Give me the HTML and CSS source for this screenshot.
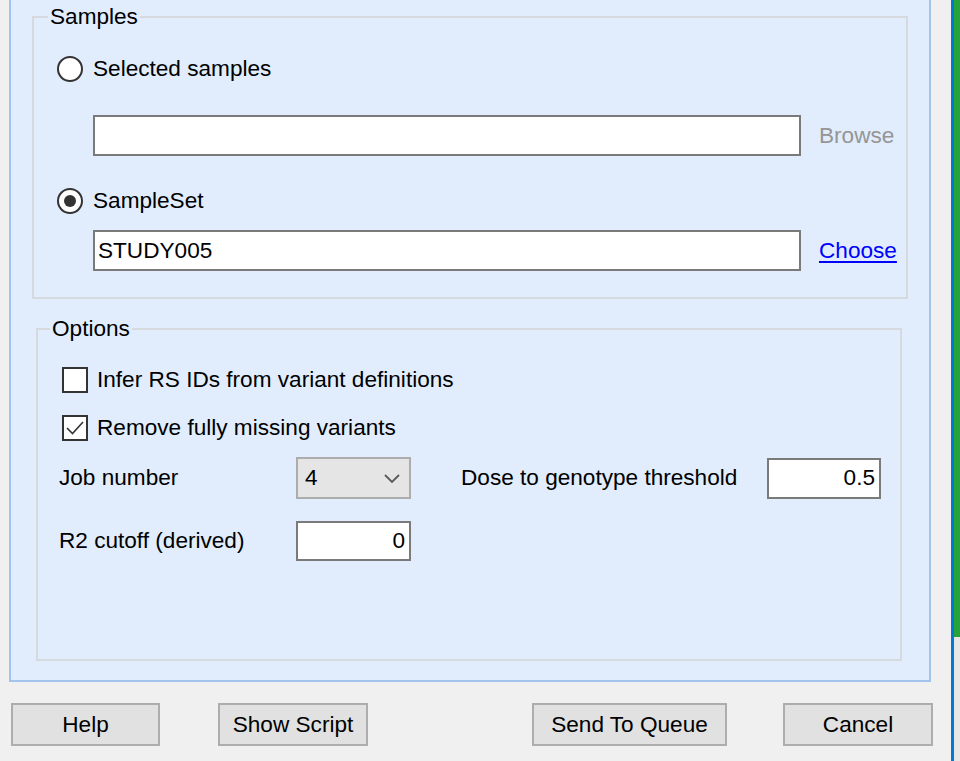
FILE: index.html
```html
<!DOCTYPE html>
<html lang="en">
<head>
<meta charset="utf-8">
<title>Samples and Options</title>
<link rel="stylesheet" href="styles.css">
</head>
<body>
<div class="window">
  <div class="dialog">
    <div class="panel">
      <fieldset class="group group-samples">
        <legend class="group-title">Samples</legend>
        <div class="samples-body">
          <label class="choice">
            <span class="radio"></span>
            <span class="choice-text">Selected samples</span>
          </label>
          <div class="field-row field-row-first">
            <input class="textbox" type="text" value="" readonly>
            <span class="side-action disabled">Browse</span>
          </div>
          <label class="choice choice-second">
            <span class="radio checked"></span>
            <span class="choice-text">SampleSet</span>
          </label>
          <div class="field-row field-row-second">
            <input class="textbox" type="text" value="STUDY005" readonly>
            <a class="side-action link" href="#">Choose</a>
          </div>
        </div>
      </fieldset>

      <fieldset class="group group-options">
        <legend class="group-title">Options</legend>
        <div class="options-body">
          <label class="check-row">
            <span class="checkbox"></span>
            <span class="choice-text">Infer RS IDs from variant definitions</span>
          </label>
          <label class="check-row check-row-second">
            <span class="checkbox">
              <svg class="checkmark" viewBox="0 0 22 22" width="22" height="22"><polyline points="3,11 8.5,16.5 19,5" fill="none" stroke="#333" stroke-width="1.6"/></svg>
            </span>
            <span class="choice-text">Remove fully missing variants</span>
          </label>
          <div class="param-row param-row-first">
            <span class="param-label">Job number</span>
            <div class="combo">
              <span>4</span>
              <svg class="chevron" viewBox="0 0 16 9" width="16" height="9"><polyline points="1,1 8,8 15,1" fill="none" stroke="#5a5a5a" stroke-width="1.8"/></svg>
            </div>
            <span class="param-label param-label-wide">Dose to genotype threshold</span>
            <input class="numbox numbox-narrow" type="text" value="0.5" readonly>
          </div>
          <div class="param-row param-row-second">
            <span class="param-label">R2 cutoff (derived)</span>
            <input class="numbox" type="text" value="0" readonly>
          </div>
        </div>
      </fieldset>
    </div>

    <div class="buttons">
      <button class="btn btn-help" type="button">Help</button>
      <button class="btn btn-script" type="button">Show Script</button>
      <button class="btn btn-queue" type="button">Send To Queue</button>
      <button class="btn btn-cancel" type="button">Cancel</button>
    </div>
  </div>
  <div class="edge">
    <div class="edge-green"></div>
    <div class="edge-rest"></div>
  </div>
</div>
</body>
</html>
```

FILE: styles.css
```css
* {
  box-sizing: border-box;
}

html,
body {
  margin: 0;
  padding: 0;
}

body {
  width: 960px;
  height: 761px;
  overflow: hidden;
  background: #f0f0f0;
  font-family: "Liberation Sans", Arial, sans-serif;
  font-size: 22.6px;
  line-height: 26px;
  color: #000;
}

.window {
  display: flex;
  height: 761px;
}

.dialog {
  width: 951px;
  display: flex;
  flex-direction: column;
}

.panel {
  margin-left: 9px;
  width: 922px;
  background: #e1edfd;
  border: 2px solid #a3c3ec;
  border-top: 0;
  padding: 4px 0 19px 0;
}

.group {
  margin: 0;
  padding: 0;
  min-width: 0;
  border: 2px solid #d6dadf;
}

.group-title {
  padding: 0 2px;
  margin-left: 14px;
  line-height: 26px;
}

.group-samples {
  margin-left: 21px;
  width: 876px;
}

.group-options {
  margin-left: 25px;
  margin-top: 17px;
  width: 866px;
}

.group-options .group-title {
  margin-left: 12px;
}

.samples-body {
  padding: 26px 0 26px 23px;
}

.choice {
  display: flex;
  align-items: center;
  gap: 10px;
  height: 26px;
}

.choice-second {
  margin-top: 32px;
}

.radio {
  flex: none;
  width: 26px;
  height: 26px;
  border-radius: 50%;
  border: 2px solid #333;
  background: #fff;
  display: flex;
  align-items: center;
  justify-content: center;
}

.radio.checked::after {
  content: "";
  width: 12px;
  height: 12px;
  border-radius: 50%;
  background: #333;
}

.field-row {
  display: flex;
  align-items: center;
  gap: 18px;
  padding-left: 36px;
}

.field-row-first {
  margin-top: 33px;
}

.field-row-second {
  margin-top: 16px;
}

.textbox {
  width: 708px;
  height: 41px;
  margin: 0;
  border: 2px solid #7a7a7a;
  background: #fff;
  padding: 0 3px;
  font: inherit;
  color: #000;
  outline: none;
}

.side-action {
  line-height: 26px;
}

.side-action.disabled {
  color: #959595;
}

.side-action.link {
  color: #0000ff;
  text-decoration: underline;
  text-underline-offset: 3px;
}

.options-body {
  padding: 25px 0 98px 21px;
}

.check-row {
  display: flex;
  align-items: center;
  gap: 9px;
  height: 26px;
  margin-left: 3px;
}

.check-row-second {
  margin-top: 22px;
}

.checkbox {
  flex: none;
  width: 26px;
  height: 26px;
  border: 2px solid #333;
  background: #fff;
  display: flex;
}

.checkmark {
  display: block;
}

.param-row {
  display: flex;
  align-items: center;
}

.param-row-first {
  margin-top: 16px;
}

.param-row-second {
  margin-top: 22px;
}

.param-label {
  width: 237px;
  flex: none;
}

.param-label-wide {
  width: 306px;
  margin-left: 50px;
}

.combo {
  flex: none;
  width: 115px;
  height: 42px;
  background: #e5e5e5;
  border: 2px solid #acacac;
  display: flex;
  align-items: center;
  justify-content: space-between;
  padding: 0 9px 0 7px;
}

.chevron {
  display: block;
}

.numbox {
  flex: none;
  width: 115px;
  height: 40px;
  margin: 0;
  border: 2px solid #7a7a7a;
  background: #fff;
  padding: 0 4px 0 3px;
  font: inherit;
  color: #000;
  text-align: right;
  outline: none;
}

.numbox-narrow {
  width: 114px;
  height: 41px;
}

.buttons {
  display: flex;
  margin-top: 21px;
  padding-left: 11px;
}

.btn {
  height: 43px;
  margin: 0;
  padding: 0;
  background: #e1e1e1;
  border: 2px solid #adadad;
  font: inherit;
  color: #000;
}

.btn-help {
  width: 149px;
}

.btn-script {
  width: 150px;
  margin-left: 58px;
}

.btn-queue {
  width: 195px;
  margin-left: 164px;
}

.btn-cancel {
  width: 150px;
  margin-left: 56px;
}

.edge {
  width: 9px;
  display: flex;
  flex-direction: column;
  border-left: 3px solid #0078d7;
}

.edge-green {
  height: 637px;
  background: #25a33a;
}

.edge-rest {
  flex: 1;
  background: #e6e6e6;
}
```
